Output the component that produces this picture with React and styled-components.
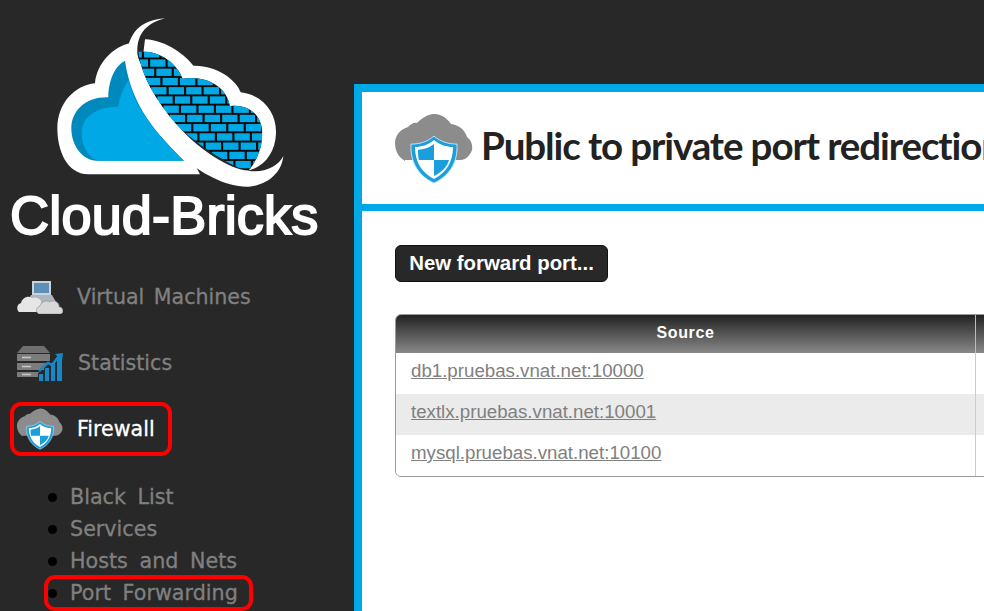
import styled, { createGlobalStyle } from 'styled-components';

const CYAN = '#00a9e6';

const GlobalStyle = createGlobalStyle`
  html, body { margin: 0; padding: 0; background: #282828; overflow: hidden; }
  body { font-family: "Liberation Sans", Arial, sans-serif; }
`;

const Page = styled.div`
  display: flex;
  width: 984px;
  height: 611px;
  overflow: hidden;
  background: #282828;
`;

const Sidebar = styled.aside`
  flex: 0 0 354px;
  display: flex;
  flex-direction: column;
`;

const LogoArt = styled.svg`
  display: block;
  width: 340px;
  height: 190px;
`;

const LogoName = styled.div`
  height: 50px;
  padding-left: 10px;
  font-size: 54px;
  line-height: 50px;
  font-weight: 400;
  letter-spacing: 0.2px;
  -webkit-text-stroke: 2px #fff;
  color: #fff;
  white-space: nowrap;
`;

const Nav = styled.nav`
  display: flex;
  flex-direction: column;
  align-items: flex-start;
  gap: 20px;
  margin-top: 34px;
`;

const NavRow = styled.a`
  display: flex;
  align-items: center;
  gap: 14px;
  height: 46px;
  margin-left: 14px;
  padding: 0 13px 0 3px;
  font-family: "DejaVu Sans", sans-serif;
  font-size: 20.6px;
  word-spacing: 3px;
  -webkit-text-stroke: 0.3px currentColor;
  color: ${(p) => (p.$active ? '#fff' : '#808080')};
  outline: ${(p) => (p.$marked ? '4px solid #f00' : 'none')};
  border-radius: 7px;
`;

const SubList = styled.ul`
  list-style: none;
  display: flex;
  flex-direction: column;
  align-items: flex-start;
  gap: 4px;
  margin: 31px 0 0 48px;
  padding: 0;
`;

const SubItem = styled.li`
  display: flex;
  align-items: center;
  gap: 13px;
  height: 28px;
  padding-right: 11px;
  font-family: "DejaVu Sans", sans-serif;
  font-size: 20.7px;
  word-spacing: 5px;
  -webkit-text-stroke: 0.3px currentColor;
  color: #808080;
  white-space: nowrap;
  outline: ${(p) => (p.$marked ? '4px solid #f00' : 'none')};
  border-radius: 7px;

  &::before {
    content: '';
    width: 9px;
    height: 9px;
    border-radius: 50%;
    background: #000;
  }
`;

const Main = styled.main`
  flex: 1;
  min-width: 0;
  padding-top: 84px;
`;

const Panel = styled.section`
  height: 600px;
  border: 8px solid ${CYAN};
  border-right: 0;
  background: #fff;
  overflow: hidden;
`;

const PanelHeader = styled.header`
  display: flex;
  align-items: center;
  gap: 8px;
  height: 112px;
  padding-left: 33px;
  border-bottom: 7px solid ${CYAN};
`;

const Title = styled.h1`
  margin: 0 0 6px;
  font-family: "Lato", sans-serif;
  font-size: 38.5px;
  font-weight: 700;
  letter-spacing: -1.1px;
  color: #222;
  white-space: nowrap;
`;

const PanelBody = styled.div`
  padding: 34px 0 0 33px;
`;

const Button = styled.button`
  display: block;
  width: 213px;
  height: 37px;
  padding: 0;
  border: 1px solid #111;
  border-radius: 6px;
  background: #282828;
  color: #fff;
  font-family: "Liberation Sans", sans-serif;
  font-size: 20.4px;
  font-weight: 700;
`;

const Table = styled.div`
  width: 900px;
  margin-top: 32px;
  border: 1px solid #999;
  border-radius: 6px;
  overflow: hidden;
`;

const Row = styled.div`
  display: grid;
  grid-template-columns: 580px 1fr;
  height: ${(p) => (p.$head ? '38px' : '41px')};
  background: ${(p) => (p.$head ? 'linear-gradient(#222, #888)' : p.$alt ? '#ebebeb' : '#fff')};
`;

const HeadCell = styled.div`
  display: flex;
  align-items: center;
  justify-content: center;
  padding-bottom: 2px;
  border-right: 1px solid #bbb;
  color: #fff;
  font-size: 16px;
  letter-spacing: 0.6px;
  font-weight: 700;
`;

const Cell = styled.div`
  display: flex;
  align-items: center;
  padding: 0 0 5px 15px;
  border-right: 1px solid #ccc;
  font-size: 18.7px;
`;

const HostLink = styled.a`
  color: #808080;
  text-decoration: underline;
`;

const shield = (
  <>
    <path d="M39 23C32 29 24 31 16 31C15 50 24 63 39 70C54 63 63 50 62 31C54 31 46 29 39 23Z" fill="#1a9fdc" stroke="#bfe6f7" strokeWidth="1" />
    <path d="M39 27C33 32 26 34 20 34C20 49 27 60 39 66C51 60 58 49 58 34C52 34 45 32 39 27Z" fill="#fff" />
    <path d="M39 31C34 35 28 36 23 37C23 39 23 44 24 47H39ZM39 47V63C47 59 52 54 54 47Z" fill="#1a9fdc" />
  </>
);

function FirewallIcon({ size }) {
  return (
    <svg width={size} height={size * 0.9} viewBox="0 0 78 70" style={{ flex: 'none' }}>
      <path d="M10 48C3 44 0 37 0 30C0 22 6 16 13 14C16 11 19 9 22 10C26 6 31 2 38 1C46 0 53 6 56 11C64 12 70 17 72 24C76 27 78 32 77 37C75 43 70 47 66 47H10Z" fill="#8c8c8c" />
      {shield}
    </svg>
  );
}

function VmIcon() {
  return (
    <svg width="46" height="34" viewBox="0 0 46 34" style={{ flex: 'none' }}>
      <path d="M15 1H34V15H15Z" fill="#c9d3da" />
      <path d="M17 3H32V13H17Z" fill="#5d8fb8" />
      <path d="M10 22L14 15H35L39 22Z" fill="#aeb6bb" />
      <path d="M2 32C-1 29 0 24 4 23C5 18 11 15 15 18C20 16 25 20 25 24C29 25 29 32 25 32Z" fill="#e6e6e6" />
      <path d="M22 34C18 32 19 27 23 26C24 21 30 20 33 22C37 19 43 23 42 27C47 27 47 34 43 34Z" fill="#d8d8d8" stroke="#9a9a9a" strokeWidth="0.7" />
    </svg>
  );
}

function StatsIcon() {
  return (
    <svg width="47" height="36" viewBox="0 0 47 36" style={{ flex: 'none' }}>
      <path d="M6 1H27L33 8H0Z" fill="#6f6f6f" />
      <path d="M0 9H33V16H0ZM0 18H31V25H0ZM0 27H22V32H0Z" fill="#7c7c7c" />
      <path d="M5 12.5H14M5 21.5H14M5 29.5H14" stroke="#c8c8c8" strokeWidth="1.5" />
      <path d="M21 36V28H27V20H33V15H39V10H47V36Z" fill="#282828" />
      <path d="M22 36V29H26V36ZM28 36V23H32V36ZM34 36V18H38V36ZM40 36V13H45V36Z" fill="#1488c8" />
      <path d="M22 26L31 18L35 20L42 11" fill="none" stroke="#1488c8" strokeWidth="2.5" />
      <path d="M38 9L46 8L45 16Z" fill="#1488c8" />
    </svg>
  );
}

// bricks are upright but every row shifts right, so the wall leans with the swoosh
const bricks = [];
for (let k = 0; k < 13; k++) {
  for (let n = -6; n < 8; n++) {
    bricks.push({ x: 432 + 18.5 * k + 52.5 * n, y: 150.5 + 27.7 * k });
  }
}

function Logo() {
  return (
    <LogoArt viewBox="0 0 1020 570">
      <defs>
        <clipPath id="wall">
          <path d="M415 155C480 150 530 190 548 236C620 225 680 260 690 318C750 310 787 350 787 400C787 450 765 490 745 512C700 505 600 440 540 385C470 310 425 230 415 155Z" />
        </clipPath>
      </defs>
      <path d="M265 523C200 523 172 450 172 385C172 310 225 255 285 250C290 190 340 140 390 130L600 523Z" fill="#fff" />
      <path d="M435 118C500 120 560 170 580 197C650 195 710 240 722 277C790 285 830 340 828 400C826 460 790 505 740 512L560 400L430 160Z" fill="#fff" />
      <path d="M375 182C340 200 325 250 325 292C260 290 214 330 214 385C214 440 250 482 290 482H552C470 400 395 320 375 182Z" fill="#0089bd" />
      <path d="M385 240C368 270 358 295 355 320C290 320 245 350 245 400C245 440 270 482 300 482H552C480 410 410 340 385 240Z" fill={CYAN} />
      <g clipPath="url(#wall)">
        <rect x="400" y="140" width="400" height="380" fill="#0a0a0a" />
        {bricks.map((b, i) => (
          <rect key={i} x={b.x} y={b.y} width="46" height="22" fill={CYAN} />
        ))}
      </g>
      <path d="M495 55C420 60 385 100 380 170C385 260 440 360 540 465C600 520 680 562 745 560C800 556 845 520 850 468C835 500 790 520 745 512C690 510 600 450 540 385C470 310 420 220 412 160C410 100 440 70 495 55Z" fill="#fff" />
    </LogoArt>
  );
}

export default function App() {
  return (
    <Page>
      <GlobalStyle />
      <Sidebar>
        <Logo />
        <LogoName>Cloud-Bricks</LogoName>
        <Nav>
          <NavRow><VmIcon />Virtual Machines</NavRow>
          <NavRow><StatsIcon />Statistics</NavRow>
          <NavRow $active $marked><FirewallIcon size={46} />Firewall</NavRow>
        </Nav>
        <SubList>
          <SubItem>Black List</SubItem>
          <SubItem>Services</SubItem>
          <SubItem>Hosts and Nets</SubItem>
          <SubItem $marked>Port Forwarding</SubItem>
        </SubList>
      </Sidebar>
      <Main>
        <Panel>
          <PanelHeader>
            <FirewallIcon size={78} />
            <Title>Public to private port redirection</Title>
          </PanelHeader>
          <PanelBody>
            <Button>New forward port...</Button>
            <Table>
              <Row $head><HeadCell>Source</HeadCell><HeadCell /></Row>
              <Row><Cell><HostLink>db1.pruebas.vnat.net:10000</HostLink></Cell><Cell /></Row>
              <Row $alt><Cell><HostLink>textlx.pruebas.vnat.net:10001</HostLink></Cell><Cell /></Row>
              <Row><Cell><HostLink>mysql.pruebas.vnat.net:10100</HostLink></Cell><Cell /></Row>
            </Table>
          </PanelBody>
        </Panel>
      </Main>
    </Page>
  );
}
